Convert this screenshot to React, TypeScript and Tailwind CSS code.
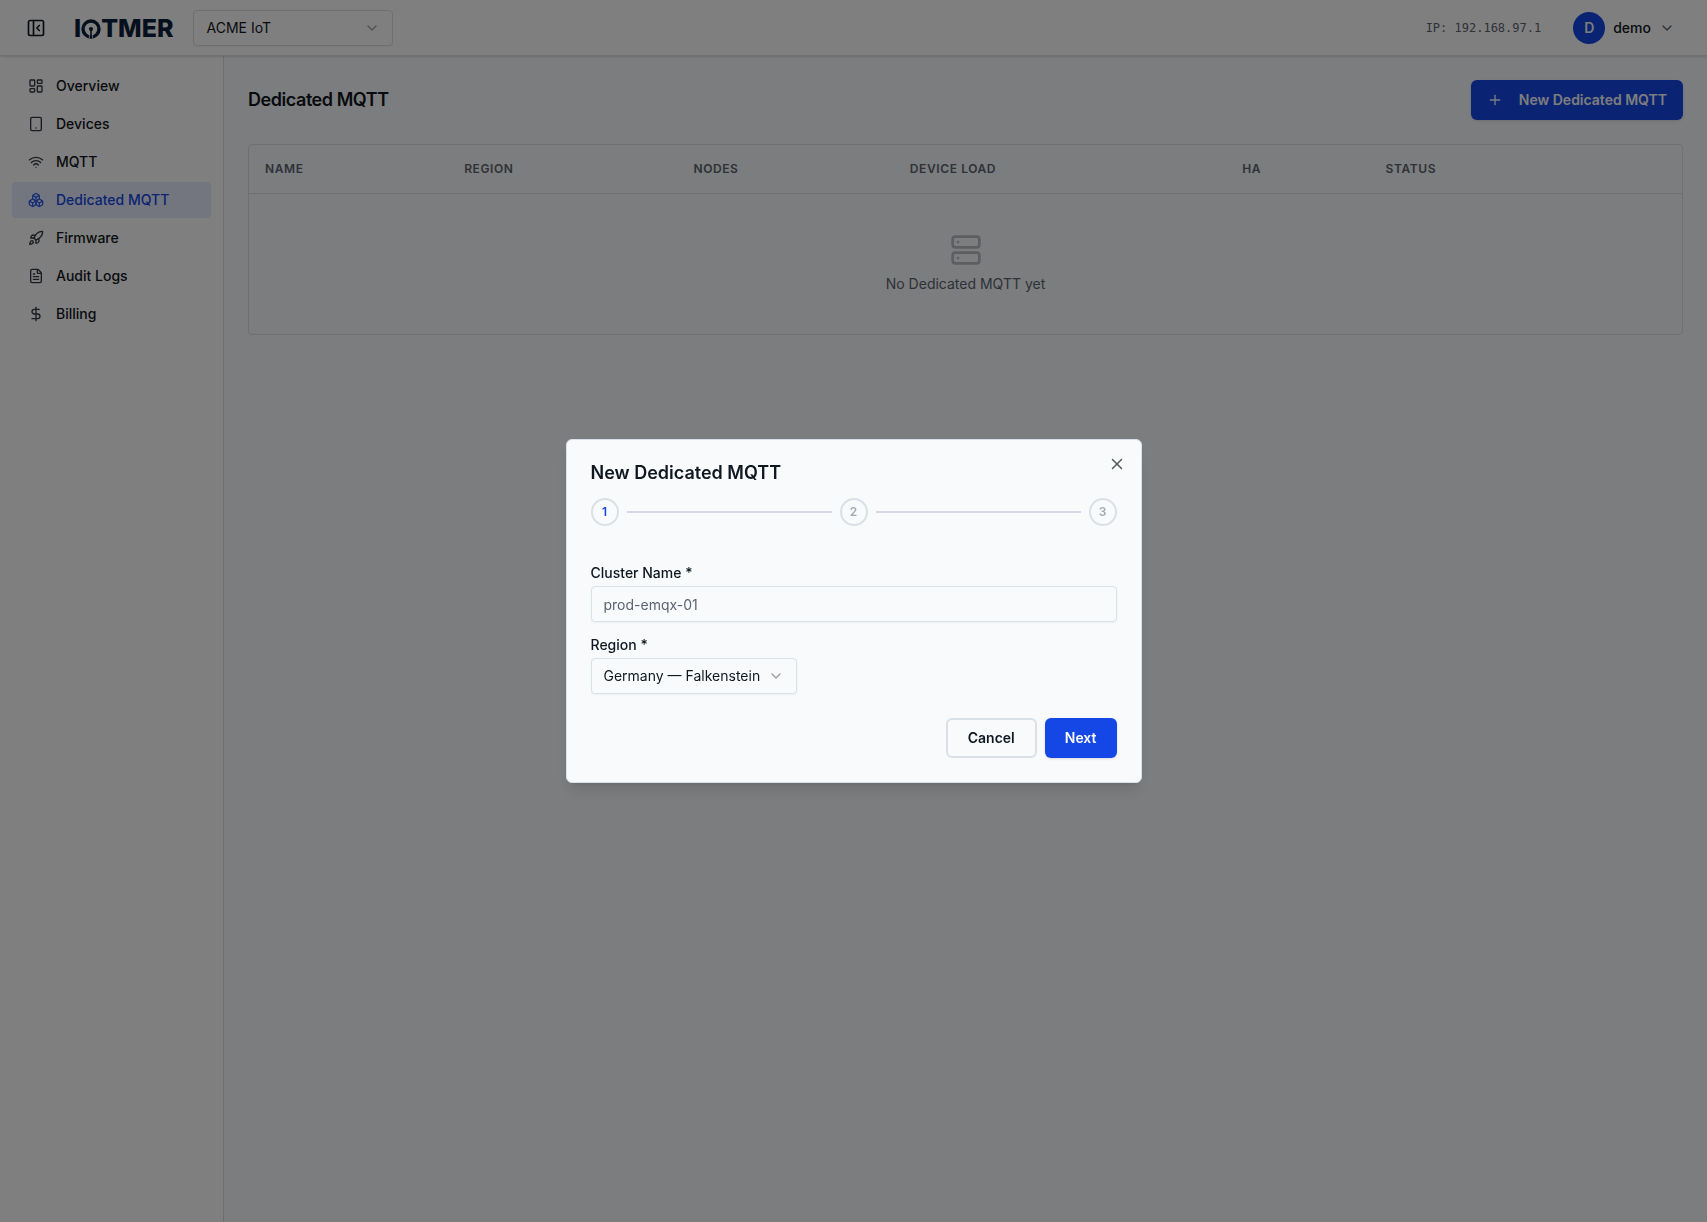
import React, { useState } from "react";
import {
  Boxes,
  ChevronDown,
  DollarSign,
  FileText,
  LayoutDashboard,
  PanelLeftClose,
  Plus,
  Rocket,
  Server,
  Tablet,
  Wifi,
  X,
} from "lucide-react";

const NAV_ITEMS = [
  { label: "Overview", icon: LayoutDashboard },
  { label: "Devices", icon: Tablet },
  { label: "MQTT", icon: Wifi },
  { label: "Dedicated MQTT", icon: Boxes, active: true },
  { label: "Firmware", icon: Rocket },
  { label: "Audit Logs", icon: FileText },
  { label: "Billing", icon: DollarSign },
];

const COLUMNS = [
  { label: "Name", width: "w-[13.9%]" },
  { label: "Region", width: "w-[16%]" },
  { label: "Nodes", width: "w-[15.1%]" },
  { label: "Device Load", width: "w-[23.2%]" },
  { label: "HA", width: "w-[10%]" },
  { label: "Status", width: "" },
];

function Logo() {
  return (
    <a
      href="#"
      aria-label="IOTMER"
      className="flex items-center pt-0.5 text-[25px] leading-none font-extrabold text-[#0b1f3a]"
    >
      <span>I</span>
      <svg viewBox="0 0 20 20" className="h-5 w-5" fill="none">
        <circle cx="10" cy="10" r="8" stroke="currentColor" strokeWidth="3.4" />
        <circle cx="10" cy="10" r="2.1" fill="currentColor" />
        <path d="M10 10v8" stroke="currentColor" strokeWidth="1.6" />
        <path d="M8.4 15v4M11.6 15v4" stroke="#fff" strokeWidth="0.8" />
      </svg>
      <span>TMER</span>
    </a>
  );
}

function Header() {
  return (
    <header className="relative z-10 flex h-14 items-center justify-between border-b border-[#dae0e7] bg-white pr-6 pl-4 shadow-sm">
      <div className="flex items-center">
        <button
          type="button"
          aria-label="Collapse sidebar"
          className="flex h-10 w-10 items-center justify-center rounded-md"
        >
          <PanelLeftClose className="h-5 w-5" />
        </button>
        <div className="ml-[18px] flex items-center gap-5">
          <Logo />
          <div className="relative">
            <select
              aria-label="Organization"
              className="h-9 w-[200px] appearance-none rounded border border-[#dae0e7] bg-white px-3 text-sm shadow-xs"
            >
              <option>ACME IoT</option>
            </select>
            <ChevronDown className="pointer-events-none absolute top-[10px] right-[13px] h-4 w-4 opacity-40" />
          </div>
        </div>
      </div>

      <div className="flex items-center gap-6">
        <span className="font-['DejaVu_Sans_Mono',monospace] text-xs text-[#5b6470]">
          IP: 192.168.97.1
        </span>
        <button
          type="button"
          className="flex items-center gap-2 px-2 text-sm font-medium"
        >
          <span className="flex h-8 w-8 items-center justify-center rounded-full bg-[#1447e6] font-semibold text-[#f8fafc]">
            D
          </span>
          demo
          <ChevronDown className="h-4 w-4 text-[#5b6470]" />
        </button>
      </div>
    </header>
  );
}

function Sidebar() {
  return (
    <nav className="flex w-56 shrink-0 flex-col gap-0.5 border-r border-[#dae0e7] bg-white p-3">
      {NAV_ITEMS.map(({ label, icon: Icon, active }) => (
        <a
          key={label}
          href="#"
          className={`flex h-9 items-center gap-3 rounded px-4 text-sm font-medium ${
            active ? "bg-[#1447e6]/10 text-[#1447e6]" : ""
          }`}
        >
          <Icon className="h-4 w-4 opacity-85" />
          {label}
        </a>
      ))}
    </nav>
  );
}

function ClusterTable() {
  return (
    <div className="rounded border border-[#dae0e7]">
      <table className="w-full table-fixed text-sm">
        <thead>
          <tr className="h-12 border-b border-[#dae0e7]">
            {COLUMNS.map((col) => (
              <th
                key={col.label}
                className={`${col.width} px-4 text-left text-xs font-semibold tracking-wider text-[#5b6470] uppercase`}
              >
                {col.label}
              </th>
            ))}
          </tr>
        </thead>
        <tbody>
          <tr>
            <td colSpan={COLUMNS.length} className="py-10 text-[#5b6470]">
              <div className="flex flex-col items-center gap-2">
                <Server className="h-8 w-8 opacity-40" />
                No Dedicated MQTT yet
              </div>
            </td>
          </tr>
        </tbody>
      </table>
    </div>
  );
}

function Steps({ current }: { current: number }) {
  return (
    <div className="mt-4 flex items-center gap-2">
      {[1, 2, 3].map((step) => (
        <React.Fragment key={step}>
          {step > 1 && <div className="h-0.5 flex-1 bg-[#d5dae2]" />}
          <div
            className={`flex h-7 w-7 items-center justify-center rounded-full border-2 border-[#dae0e7] text-xs font-semibold ${
              step === current ? "text-[#1447e6]" : "text-[#a3a9b1]"
            }`}
          >
            {step}
          </div>
        </React.Fragment>
      ))}
    </div>
  );
}

function NewClusterDialog({ onClose }: { onClose: () => void }) {
  const [name, setName] = useState("");

  return (
    <div className="fixed inset-0 z-50 flex items-center justify-center bg-black/50">
      <div
        role="dialog"
        aria-modal="true"
        aria-labelledby="dialog-title"
        className="relative w-full max-w-xl rounded-md border border-[#dae0e7] bg-[#f8fafc] p-6 shadow-lg"
      >
        <button
          type="button"
          aria-label="Close"
          onClick={onClose}
          className="absolute top-[15px] right-[15px] opacity-70"
        >
          <X className="h-[18px] w-[18px]" />
        </button>

        <h2 id="dialog-title" className="text-lg leading-none font-semibold">
          New Dedicated MQTT
        </h2>
        <Steps current={1} />

        <form className="mt-10" onSubmit={(e) => e.preventDefault()}>
          <div className="flex flex-col gap-4">
            <div className="flex flex-col gap-1.5">
              <label
                htmlFor="cluster-name"
                className="text-sm leading-none font-medium"
              >
                Cluster Name *
              </label>
              <input
                id="cluster-name"
                type="text"
                value={name}
                onChange={(e) => setName(e.target.value)}
                placeholder="prod-emqx-01"
                className="h-9 w-full rounded border border-[#dae0e7] px-3 text-sm shadow-xs placeholder:text-[#5b6470]"
              />
            </div>
            <div className="flex flex-col items-start gap-1.5">
              <label
                htmlFor="region"
                className="text-sm leading-none font-medium"
              >
                Region *
              </label>
              <div className="relative">
                <select
                  id="region"
                  className="h-9 appearance-none rounded border border-[#dae0e7] bg-[#f8fafc] pr-[35px] pl-3 text-sm shadow-xs"
                >
                  <option>Germany — Falkenstein</option>
                </select>
                <ChevronDown className="pointer-events-none absolute top-[10px] right-[13px] h-4 w-4 opacity-40" />
              </div>
            </div>
          </div>

          <div className="mt-6 flex justify-end gap-2">
            <button
              type="button"
              onClick={onClose}
              className="h-10 rounded-md border-2 border-[#dae0e7] px-5 text-sm font-semibold"
            >
              Cancel
            </button>
            <button
              type="submit"
              className="h-10 rounded-md bg-[#1447e6] px-5 text-sm font-semibold text-[#f8fafc] shadow-sm"
            >
              Next
            </button>
          </div>
        </form>
      </div>
    </div>
  );
}

export default function App() {
  const [open, setOpen] = useState(true);

  return (
    <div className="flex min-h-screen flex-col bg-[#f8fafc] font-[Inter,sans-serif] text-[#0f1720] antialiased">
      <Header />
      <div className="flex flex-1">
        <Sidebar />
        <main className="flex flex-1 flex-col gap-6 p-6">
          <div className="flex items-center justify-between">
            <h1 className="text-lg font-semibold tracking-tight">
              Dedicated MQTT
            </h1>
            <button
              type="button"
              onClick={() => setOpen(true)}
              className="flex h-10 items-center gap-4 rounded-md bg-[#1447e6] px-4 text-sm font-semibold text-[#f8fafc] shadow-sm"
            >
              <Plus className="h-4 w-4" />
              New Dedicated MQTT
            </button>
          </div>
          <ClusterTable />
        </main>
      </div>
      {open && <NewClusterDialog onClose={() => setOpen(false)} />}
    </div>
  );
}
